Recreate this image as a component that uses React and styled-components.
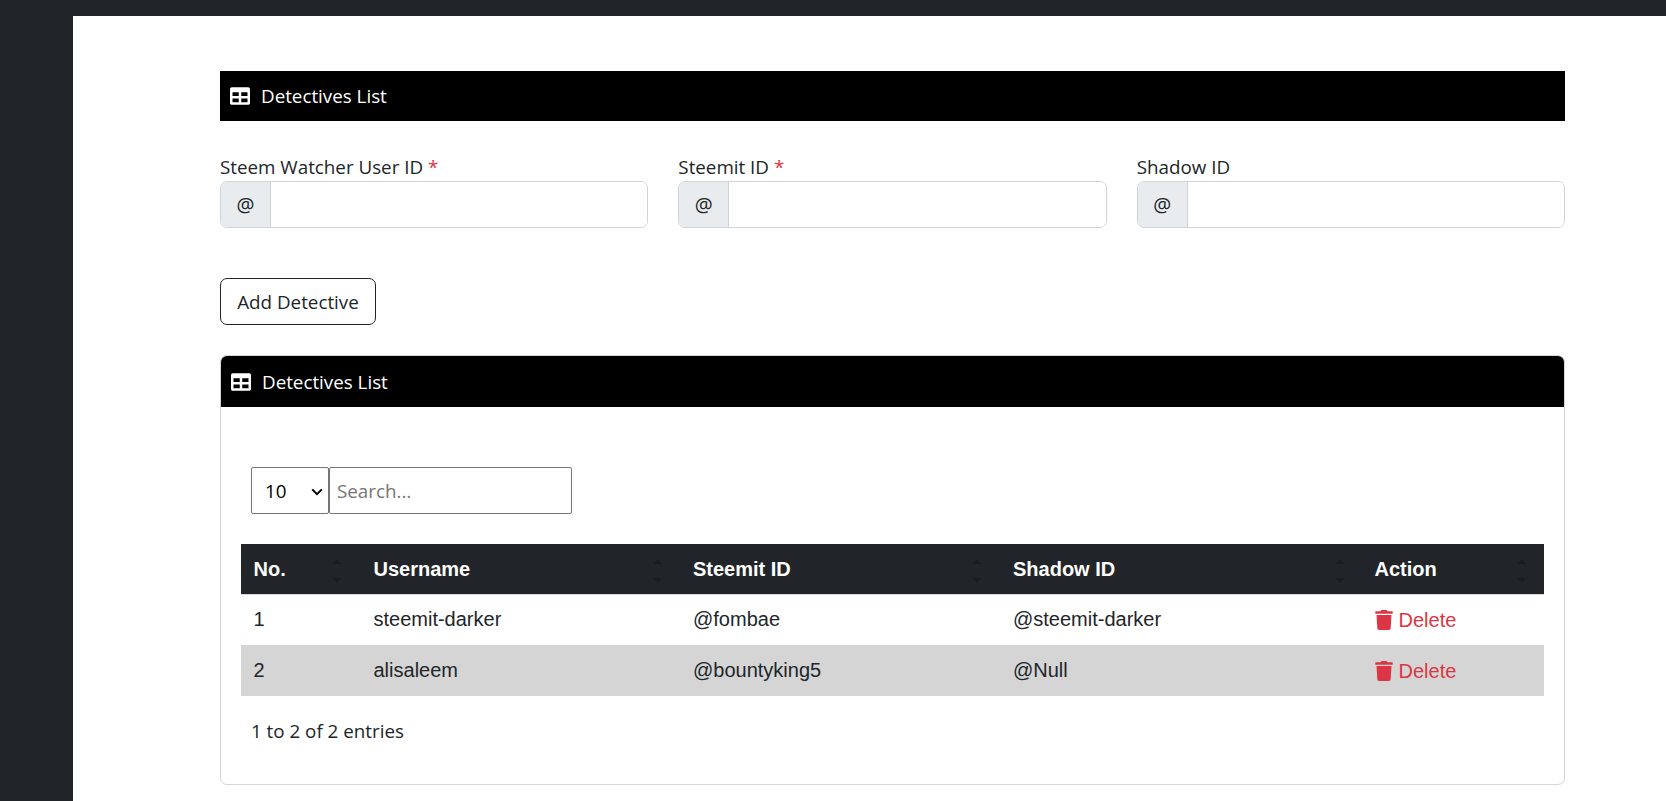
import React from 'react';
import styled, { createGlobalStyle } from 'styled-components';
import { FaTrash, FaTable } from 'react-icons/fa';

const Global = createGlobalStyle`
  * { box-sizing: border-box; }
  html, body { margin: 0; padding: 0; background: #fff; height: 100%; overflow: hidden; }
  body { font-family: "Open Sans", "Liberation Sans", sans-serif; font-size: 18.8px; color: #212529; }
`;

const Page = styled.div`
  height: 801px;
  display: flex;
  flex-direction: column;
  background: #212529;
  padding-top: 16px;
`;
const Shell = styled.div`
  flex: 1;
  display: flex;
`;
const Sidebar = styled.aside`
  width: 73px;
  flex: none;
`;
const Main = styled.main`
  flex: 1;
  background: #fff;
  padding: 55px 101px 0 147px;
  display: flex;
  flex-direction: column;
`;
const HeaderBar = styled.div`
  height: ${p => p.$h}px;
  background: #000;
  color: #fff;
  display: flex;
  align-items: center;
  gap: 11px;
  padding-left: 10px;
  font-size: 18.8px;
  border-radius: ${p => (p.$rounded ? '6px 6px 0 0' : '0')};
  svg { width: 20px; height: 20px; flex: none; }
`;
const FormRow = styled.div`
  display: grid;
  grid-template-columns: repeat(3, 1fr);
  gap: 30px;
  margin-top: 31px;
`;
const Field = styled.div`
  display: flex;
  flex-direction: column;
`;
const Label = styled.label`
  line-height: 30px;
  height: 29px;
`;
const Required = styled.span`
  color: #dc3545;
`;
const InputGroup = styled.div`
  display: flex;
  height: 47px;
  border: 1px solid #ced4da;
  border-radius: 7px;
  overflow: hidden;
`;
const Prefix = styled.span`
  width: 50px;
  flex: none;
  background: #e9ecef;
  border-right: 1px solid #ced4da;
  display: flex;
  align-items: center;
  justify-content: center;
  font-size: 20px;
`;
const TextInput = styled.input`
  flex: 1;
  min-width: 0;
  border: 0;
  outline: 0;
  background: #fff;
`;
const AddButton = styled.button`
  align-self: flex-start;
  margin-top: 50px;
  height: 47px;
  width: 156px;
  background: #fff;
  border: 1px solid #212529;
  border-radius: 7px;
  color: #212529;
  font-family: inherit;
  font-size: 18.8px;
  padding: 0;
`;
const Card = styled.section`
  margin-top: 30px;
  height: 430px;
  border: 1px solid #d3d5d7;
  border-radius: 7px;
  display: flex;
  flex-direction: column;
`;
const CardBody = styled.div`
  flex: 1;
  padding: 60px 20px 0 20px;
  display: flex;
  flex-direction: column;
`;
const Controls = styled.div`
  display: flex;
  padding-left: 10px;
`;
const PageSize = styled.select`
  appearance: none;
  width: 78px;
  height: 47px;
  background: #fff url("data:image/svg+xml,%3Csvg xmlns='http://www.w3.org/2000/svg' viewBox='0 0 12 8'%3E%3Cpath d='M1.2 1.4 L6 6.2 L10.8 1.4' fill='none' stroke='%23000' stroke-width='2'/%3E%3C/svg%3E") no-repeat 59px 20px / 12px 8px;
  border: 1px solid #767676;
  border-radius: 2px;
  color: #000;
  font-family: inherit;
  font-size: 18.8px;
  padding-left: 13px;
`;
const Search = styled.input`
  width: 243px;
  height: 47px;
  border: 1px solid #767676;
  border-radius: 2px;
  font-family: inherit;
  font-size: 18.8px;
  padding: 0 7px;
  outline: 0;
  &::placeholder { color: #757575; opacity: 1; }
`;
const Table = styled.table`
  margin-top: 30px;
  width: 100%;
  table-layout: fixed;
  border-collapse: collapse;
  font-family: "Liberation Sans", Arial, sans-serif;
  font-size: 20px;
`;
const Th = styled.th`
  position: relative;
  height: 50px;
  width: ${p => p.$w}px;
  padding: 1px 12.5px 0;
  background: #212529;
  color: #fff;
  text-align: left;
  font-weight: 700;
  border-bottom: 1px solid #d8dadc;
`;
const SortArrows = styled.svg`
  position: absolute;
  right: ${p => p.$r}px;
  top: 15px;
  width: 10px;
  height: 24px;
`;
const Row = styled.tr`
  background: ${p => (p.$striped ? '#d5d5d5' : '#fff')};
`;
const Td = styled.td`
  height: 51px;
  padding: 0 12.5px;
  color: #212529;
`;
const DeleteLink = styled.span`
  color: #dc3545;
  display: inline-flex;
  align-items: center;
  gap: 6px;
  vertical-align: middle;
  svg { width: 18px; height: 20px; }
`;
const Footer = styled.div`
  margin-top: 21px;
  padding-left: 10px;
  line-height: 28px;
`;

const Sort = ({ r }) => (
  <SortArrows $r={r} viewBox="0 0 10 24">
    <path d="M5 0 L9.5 5 H0.5 Z M0.5 19 H9.5 L5 24 Z" fill="#000" opacity="0.2" />
  </SortArrows>
);

const columns = [
  { label: 'No.', w: 120, r: 19 },
  { label: 'Username', w: 319.5, r: 18 },
  { label: 'Steemit ID', w: 320, r: 19 },
  { label: 'Shadow ID', w: 361.5, r: 17 },
  { label: 'Action', w: 182, r: 17 },
];

const rows = [
  ['1', 'steemit-darker', '@fombae', '@steemit-darker'],
  ['2', 'alisaleem', '@bountyking5', '@Null'],
];

const fields = [
  { label: 'Steem Watcher User ID', required: true },
  { label: 'Steemit ID', required: true },
  { label: 'Shadow ID', required: false },
];

export default function App() {
  return (
    <>
      <Global />
      <Page>
        <Shell>
          <Sidebar />
          <Main>
            <HeaderBar $h={50}>
              <FaTable />
              <span>Detectives List</span>
            </HeaderBar>
            <FormRow>
              {fields.map(f => (
                <Field key={f.label}>
                  <Label>
                    {f.label}
                    {f.required && <Required> *</Required>}
                  </Label>
                  <InputGroup>
                    <Prefix>@</Prefix>
                    <TextInput />
                  </InputGroup>
                </Field>
              ))}
            </FormRow>
            <AddButton>Add Detective</AddButton>
            <Card>
              <HeaderBar $h={51} $rounded>
                <FaTable />
                <span>Detectives List</span>
              </HeaderBar>
              <CardBody>
                <Controls>
                  <PageSize defaultValue="10">
                    <option>10</option>
                    <option>25</option>
                    <option>50</option>
                  </PageSize>
                  <Search placeholder="Search..." />
                </Controls>
                <Table>
                  <thead>
                    <tr>
                      {columns.map(c => (
                        <Th key={c.label} $w={c.w}>
                          {c.label}
                          <Sort r={c.r} />
                        </Th>
                      ))}
                    </tr>
                  </thead>
                  <tbody>
                    {rows.map((r, i) => (
                      <Row key={r[0]} $striped={i % 2 === 1}>
                        {r.map(v => (
                          <Td key={v}>{v}</Td>
                        ))}
                        <Td>
                          <DeleteLink>
                            <FaTrash />
                            Delete
                          </DeleteLink>
                        </Td>
                      </Row>
                    ))}
                  </tbody>
                </Table>
                <Footer>1 to 2 of 2 entries</Footer>
              </CardBody>
            </Card>
          </Main>
        </Shell>
      </Page>
    </>
  );
}
